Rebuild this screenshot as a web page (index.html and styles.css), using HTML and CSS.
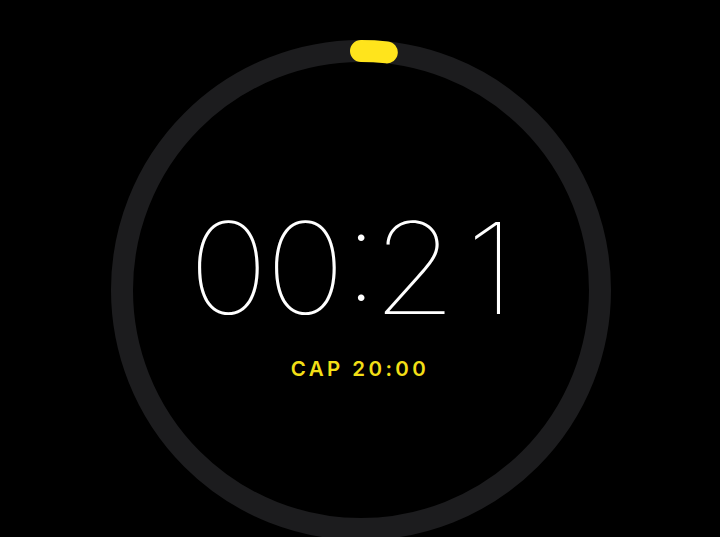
FILE: index.html
```html
<!DOCTYPE html>
<html lang="en">
<head>
<meta charset="utf-8">
<title>Timer</title>
<link rel="stylesheet" href="styles.css">
</head>
<body>
<main class="screen">
  <div class="dial">
    <svg class="ring" width="500" height="500" viewBox="0 0 500 500" aria-hidden="true">
      <circle class="ring-track" cx="250" cy="250" r="239"/>
      <path class="ring-progress" d="M250 11 A239 239 0 0 1 275.8 12.4"/>
    </svg>
    <div class="readout">
      <div class="time"><span class="digit">0</span><span class="digit">0</span><span class="sep">:</span><span class="digit">2</span><span class="digit">1</span></div>
      <div class="cap">CAP 20:00</div>
    </div>
  </div>
</main>
</body>
</html>
```
FILE: styles.css
```css
html, body {
  margin: 0;
  padding: 0;
  background: #000;
}

.screen {
  width: 720px;
  height: 537px;
  overflow: hidden;
  background: #000;
  display: flex;
  justify-content: center;
  align-items: flex-start;
  padding-top: 40px;
  padding-left: 2px;
  box-sizing: border-box;
}

.dial {
  display: grid;
  width: 500px;
  height: 500px;
  flex: none;
}

.ring,
.readout {
  grid-area: 1 / 1;
}

.ring-track {
  fill: none;
  stroke: #1c1c1e;
  stroke-width: 22;
}

.ring-progress {
  fill: none;
  stroke: #ffe41c;
  stroke-width: 22;
  stroke-linecap: round;
}

.readout {
  display: flex;
  flex-direction: column;
  align-items: center;
  padding-top: 165px;
  font-family: "Inter", "Liberation Sans", sans-serif;
}

.time {
  display: flex;
  color: #fff;
  font-size: 127px;
  font-weight: 130;
  line-height: 1;
  margin-left: -3px;
  font-feature-settings: "case" 1;
}

.digit {
  width: 77px;
  text-align: center;
  transform: scaleX(1.07);
}

.sep {
  width: 31px;
  text-align: center;
}

.cap {
  margin-top: 27px;
  color: #f2df16;
  font-size: 20.5px;
  font-weight: 600;
  letter-spacing: 3.4px;
  line-height: 1;
  margin-left: -2px;
}
```
